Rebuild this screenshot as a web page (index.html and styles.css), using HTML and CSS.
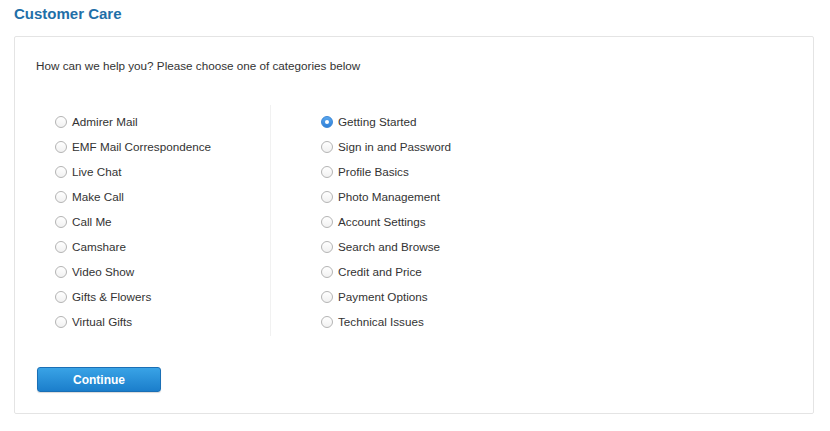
FILE: index.html
```html
<!DOCTYPE html>
<html>
<head>
<meta charset="utf-8">
<link rel="stylesheet" href="styles.css">
</head>
<body>
<h1 class="title">Customer Care</h1>
<div class="card">
  <p class="prompt">How can we help you? Please choose one of categories below</p>
  <div class="cols">
    <div class="col col-left">
      <label class="row"><span class="radio"></span>Admirer Mail</label>
      <label class="row"><span class="radio"></span>EMF Mail Correspondence</label>
      <label class="row"><span class="radio"></span>Live Chat</label>
      <label class="row"><span class="radio"></span>Make Call</label>
      <label class="row"><span class="radio"></span>Call Me</label>
      <label class="row"><span class="radio"></span>Camshare</label>
      <label class="row"><span class="radio"></span>Video Show</label>
      <label class="row"><span class="radio"></span>Gifts &amp; Flowers</label>
      <label class="row"><span class="radio"></span>Virtual Gifts</label>
    </div>
    <div class="col col-right">
      <label class="row"><span class="radio checked"></span>Getting Started</label>
      <label class="row"><span class="radio"></span>Sign in and Password</label>
      <label class="row"><span class="radio"></span>Profile Basics</label>
      <label class="row"><span class="radio"></span>Photo Management</label>
      <label class="row"><span class="radio"></span>Account Settings</label>
      <label class="row"><span class="radio"></span>Search and Browse</label>
      <label class="row"><span class="radio"></span>Credit and Price</label>
      <label class="row"><span class="radio"></span>Payment Options</label>
      <label class="row"><span class="radio"></span>Technical Issues</label>
    </div>
  </div>
  <button class="btn">Continue</button>
</div>
</body>
</html>
```
FILE: styles.css
```css
html, body {
  margin: 0;
  background: #ffffff;
}
body {
  padding: 5px 16px 0 14px;
  font-family: "Liberation Sans", Arial, Helvetica, sans-serif;
  color: #333333;
}
.title {
  margin: 0;
  font-size: 15px;
  line-height: 18px;
  font-weight: bold;
  color: #1f6fa8;
}
.card {
  margin-top: 13px;
  width: 798px;
  border: 1px solid #e4e4e4;
  border-radius: 2px;
  padding: 0 0 21px 0;
}
.prompt {
  margin: 0;
  padding: 22px 0 0 21px;
  font-size: 11.7px;
  line-height: 14px;
  color: #333333;
}
.cols {
  display: flex;
  margin-top: 32px;
  padding-left: 40px;
}
.col {
  display: flex;
  flex-direction: column;
  padding: 4px 0 2px;
}
.col-left {
  width: 215px;
  border-right: 1px solid #f1f1f1;
}
.col-right {
  padding-left: 50px;
}
.row {
  display: flex;
  align-items: center;
  height: 25px;
  font-size: 11.7px;
  color: #333333;
}
.radio {
  box-sizing: border-box;
  width: 12px;
  height: 12px;
  border-radius: 50%;
  border: 1px solid #b4b4b4;
  background: linear-gradient(#ffffff, #f1f1f1);
  margin-right: 5px;
  flex: none;
  position: relative;
}
.radio.checked {
  border-color: #3a86d6;
  background: linear-gradient(#5aa7ee, #2f80d8);
}
.radio.checked::after {
  content: "";
  position: absolute;
  left: 3px;
  top: 3px;
  width: 4px;
  height: 4px;
  border-radius: 50%;
  background: #ffffff;
}
.btn {
  display: block;
  margin: 31px 0 0 22px;
  width: 124px;
  height: 25px;
  border: 1px solid #1a6fb5;
  border-radius: 3px;
  background: linear-gradient(#39a3e6, #1b7ecb);
  color: #ffffff;
  font-family: "Liberation Sans", Arial, Helvetica, sans-serif;
  font-size: 12px;
  font-weight: bold;
  padding: 0;
  box-shadow: 0 1px 1px rgba(0,0,0,0.15);
}
```
